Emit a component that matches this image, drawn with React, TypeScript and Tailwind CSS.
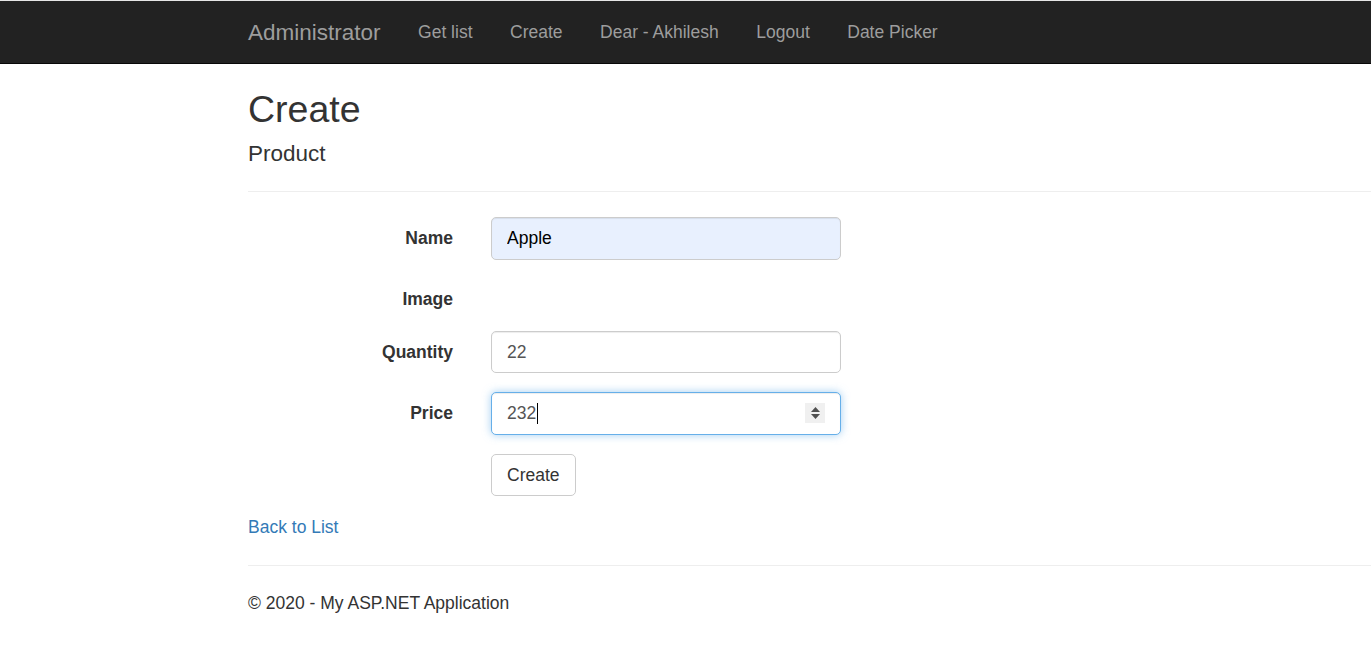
import React from 'react';

const font = { fontFamily: '"Liberation Sans", Arial, Helvetica, sans-serif' };

const navLinks = ['Get list', 'Create', 'Dear - Akhilesh', 'Logout', 'Date Picker'];

const FormRow: React.FC<{ label: string; children?: React.ReactNode }> = ({ label, children }) => (
    <div className="flex items-start mb-[18.75px]">
        <label className="w-[205px] shrink-0 text-right font-bold text-[17.5px] leading-[25px] pt-[8.75px] text-[#333]">
            {label}
        </label>
        <div className="ml-[38px]">{children}</div>
    </div>
);

export default function App() {
    return (
        <div className="min-h-screen bg-white text-[#333] text-[17.5px]" style={font}>
            {/* Navbar */}
            <div className="h-px bg-[#e6e6e6]" />
            <nav className="h-[63px] bg-[#222] border-b border-[#080808] flex items-center pl-[248px]">
                <span className="text-[22.5px] leading-[25px] text-[#9d9d9d] pr-[18.75px]">Administrator</span>
                {navLinks.map((link) => (
                    <a key={link} className="px-[18.75px] text-[17.5px] leading-[25px] text-[#9d9d9d]">
                        {link}
                    </a>
                ))}
            </nav>

            <div className="pl-[248px]">
                <h2 className="mt-[24.5px] text-[37.5px] leading-[1.1] font-normal text-[#333]">Create</h2>
                <h4 className="mt-[12.5px] text-[22.5px] leading-[1.1] font-normal text-[#333]">Product</h4>
                <hr className="mt-[24px] mb-[25px] border-0 border-t border-[#eee]" />

                <FormRow label="Name">
                    <input
                        readOnly
                        value="Apple"
                        className="w-[350px] h-[42.5px] px-[15px] rounded-[5px] border border-[#ccc] bg-[#e8f0fe] text-black text-[17.5px] outline-none shadow-[inset_0_1px_1px_rgba(0,0,0,0.075)]"
                    />
                </FormRow>

                <FormRow label="Image" />

                <FormRow label="Quantity">
                    <input
                        readOnly
                        value="22"
                        className="w-[350px] h-[42.5px] px-[15px] rounded-[5px] border border-[#ccc] bg-white text-[#555] text-[17.5px] outline-none shadow-[inset_0_1px_1px_rgba(0,0,0,0.075)]"
                    />
                </FormRow>

                <FormRow label="Price">
                    <div className="w-[350px] h-[42.5px] pl-[15px] pr-[15px] rounded-[5px] border border-[#66afe9] bg-white text-[#555] text-[17.5px] flex items-center shadow-[inset_0_1px_1px_rgba(0,0,0,0.075),0_0_8px_rgba(102,175,233,0.6)]">
                        <span>232</span>
                        <span className="inline-block w-px h-[21px] bg-black ml-px" />
                        <span className="ml-auto w-[20px] h-[20px] bg-[#f0f0f0] flex flex-col items-center justify-center gap-[2px]">
                            <svg width="9" height="5" viewBox="0 0 9 5"><path d="M0 5 L4.5 0 L9 5 Z" fill="#505050" /></svg>
                            <svg width="9" height="5" viewBox="0 0 9 5"><path d="M0 0 L4.5 5 L9 0 Z" fill="#505050" /></svg>
                        </span>
                    </div>
                </FormRow>

                <div className="flex pt-px mb-[18.75px]">
                    <div className="ml-[243px]">
                        <button className="h-[42px] px-[15px] rounded-[5px] border border-[#ccc] bg-white text-[#333] text-[17.5px] leading-[25px]">
                            Create
                        </button>
                    </div>
                </div>

                <div className="leading-[25px]">
                    <a className="text-[#337ab7]">Back to List</a>
                </div>

                <hr className="mt-[25px] mb-[25px] border-0 border-t border-[#eee]" />
                <footer>
                    <p className="leading-[25px] text-[#333]">© 2020 - My ASP.NET Application</p>
                </footer>
            </div>
        </div>
    );
}
